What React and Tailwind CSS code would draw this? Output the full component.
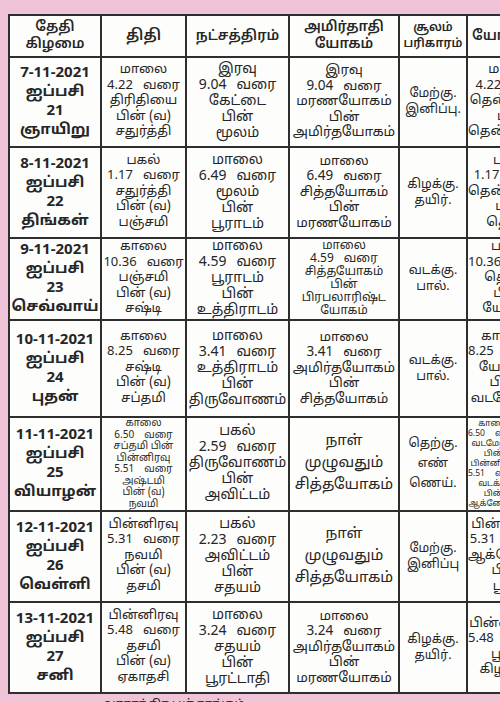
import React from "react";

const FONT = { fontFamily: '"Noto Sans Tamil", "Lohit Tamil", "Noto Sans", "DejaVu Sans", sans-serif' };

const rows = [
  {
    h: "h-[88px]",
    date: ["7-11-2021", "ஐப்பசி", "21", "ஞாயிறு"],
    tithi: ["மாலை", ["4.22", "வரை"], "திரிதியை", "பின் (வ)", "சதுர்த்தி"],
    star: ["இரவு", ["9.04", "வரை"], "கேட்டை", "பின்", "மூலம்"],
    yoga: ["இரவு", ["9.04", "வரை"], "மரணயோகம்", "பின்", "அமிர்தயோகம்"],
    soolam: ["மேற்கு.", "இனிப்பு."],
    last: ["மாலை", ["4.22", "வரை"], "தென்மேற்கு", "பின்", "தென்கிழக்கு"],
  },
  {
    h: "h-[89px]",
    date: ["8-11-2021", "ஐப்பசி", "22", "திங்கள்"],
    tithi: ["பகல்", ["1.17", "வரை"], "சதுர்த்தி", "பின் (வ)", "பஞ்சமி"],
    star: ["மாலை", ["6.49", "வரை"], "மூலம்", "பின்", "பூராடம்"],
    yoga: ["மாலை", ["6.49", "வரை"], "சித்தயோகம்", "பின்", "மரணயோகம்"],
    soolam: ["கிழக்கு.", "தயிர்."],
    last: ["பகல்", ["1.17", "வரை"], "தென்மேற்கு", "பின்", "தெற்கு"],
  },
  {
    h: "h-[80px]",
    date: ["9-11-2021", "ஐப்பசி", "23", "செவ்வாய்"],
    tithi: ["காலை", ["10.36", "வரை"], "பஞ்சமி", "பின் (வ)", "சஷ்டி"],
    star: ["மாலை", ["4.59", "வரை"], "பூராடம்", "பின்", "உத்திராடம்"],
    yoga: ["மாலை", ["4.59", "வரை"], "சித்தயோகம்", "பின்", "பிரபலாரிஷ்ட", "யோகம்"],
    yogaSmall: true,
    soolam: ["வடக்கு.", "பால்."],
    last: ["பகல்", ["10.36", "வரை"], "தெற்கு", "பின்", "யோகம்"],
  },
  {
    h: "h-[95px]",
    date: ["10-11-2021", "ஐப்பசி", "24", "புதன்"],
    tithi: ["காலை", ["8.25", "வரை"], "சஷ்டி", "பின் (வ)", "சப்தமி"],
    star: ["மாலை", ["3.41", "வரை"], "உத்திராடம்", "பின்", "திருவோணம்"],
    yoga: ["மாலை", ["3.41", "வரை"], "அமிர்தயோகம்", "பின்", "சித்தயோகம்"],
    soolam: ["வடக்கு.", "பால்."],
    last: ["காலை", ["8.25", "வரை"], "யோகம்", "பின்", "வடமேற்கு"],
  },
  {
    h: "h-[92px]",
    date: ["11-11-2021", "ஐப்பசி", "25", "வியாழன்"],
    tithi: ["காலை", ["6.50", "வரை"], "சப்தமி பின்", "பின்னிரவு", ["5.51", "வரை"], "அஷ்டமி", "பின் (வ)", "நவமி"],
    tithiSmall: true,
    star: ["பகல்", ["2.59", "வரை"], "திருவோணம்", "பின்", "அவிட்டம்"],
    yoga: ["நாள்", "முழுவதும்", "சித்தயோகம்"],
    yogaWide: true,
    soolam: ["தெற்கு.", "எண்", "ணெய்."],
    soolamWide: true,
    last: ["காலை", ["6.50", "வரை"], "வடமேற்கு", "பின்", "பின்னிரவு", ["5.51", "வரை"], "வடக்கு", "பின்", "ஆக்னேயம்"],
    lastSmall: true,
  },
  {
    h: "h-[89px]",
    date: ["12-11-2021", "ஐப்பசி", "26", "வெள்ளி"],
    tithi: ["பின்னிரவு", ["5.31", "வரை"], "நவமி", "பின் (வ)", "தசமி"],
    star: ["பகல்", ["2.23", "வரை"], "அவிட்டம்", "பின்", "சதயம்"],
    yoga: ["நாள்", "முழுவதும்", "சித்தயோகம்"],
    yogaWide: true,
    soolam: ["மேற்கு.", "இனிப்பு"],
    last: ["பின்னிரவு", ["5.31", "வரை"], "ஆக்னேயம்", "பின்", "பூமி"],
  },
  {
    h: "h-[89px]",
    date: ["13-11-2021", "ஐப்பசி", "27", "சனி"],
    tithi: ["பின்னிரவு", ["5.48", "வரை"], "தசமி", "பின் (வ)", "ஏகாதசி"],
    star: ["மாலை", ["3.24", "வரை"], "சதயம்", "பின்", "பூரட்டாதி"],
    yoga: ["மாலை", ["3.24", "வரை"], "அமிர்தயோகம்", "பின்", "மரணயோகம்"],
    soolam: ["கிழக்கு.", "தயிர்."],
    last: ["பின்னிரவு", ["5.48", "வரை"], "பூமி", "கிழக்கு"],
  },
];

function Lines({ lines, cls }) {
  return (
    <div className={"flex flex-col items-stretch text-center " + cls}>
      {lines.map((l, i) =>
        Array.isArray(l) ? (
          <div key={i} className="flex justify-center gap-[10px]">
            <span>{l[0]}</span>
            <span>{l[1]}</span>
          </div>
        ) : (
          <div key={i} className="whitespace-nowrap">{l}</div>
        )
      )}
    </div>
  );
}

function Cell({ children, className = "" }) {
  return (
    <div className={"bg-[#fdfdfb] flex items-center justify-center overflow-hidden " + className}>
      {children}
    </div>
  );
}

export default function App() {
  return (
    <div
      className="w-[500px] h-[702px] overflow-hidden bg-[#efc4d8] pt-[14px] pl-[8px] text-[#262626]"
      style={FONT}
    >
      <div className="grid grid-cols-[90px_83px_101px_108px_66px_92px] gap-[2px] bg-[#2e2e2e] p-[2px] w-[560px]">
        {/* header */}
        <Cell className="h-[40px]">
          <Lines lines={["தேதி", "கிழமை"]} cls="text-[14px] leading-[17px] font-semibold" />
        </Cell>
        <Cell className="h-[40px]">
          <Lines lines={["திதி"]} cls="text-[15px] leading-[17px] font-semibold" />
        </Cell>
        <Cell className="h-[40px]">
          <Lines lines={["நட்சத்திரம்"]} cls="text-[14px] leading-[17px] font-semibold" />
        </Cell>
        <Cell className="h-[40px]">
          <Lines lines={["அமிர்தாதி", "யோகம்"]} cls="text-[14px] leading-[17px] font-semibold" />
        </Cell>
        <Cell className="h-[40px]">
          <Lines lines={["சூலம்", "பரிகாரம்"]} cls="text-[12px] leading-[16px] font-semibold" />
        </Cell>
        <Cell className="h-[40px] justify-start pl-[4px]">
          <Lines lines={["யோகினி"]} cls="text-[14px] leading-[17px] font-semibold" />
        </Cell>

        {rows.map((r, i) => (
          <React.Fragment key={i}>
            <Cell className={r.h}>
              <Lines lines={r.date} cls="text-[15px] leading-[19px] font-bold" />
            </Cell>
            <Cell className={r.h}>
              <Lines
                lines={r.tithi}
                cls={r.tithiSmall ? "text-[10px] leading-[11.5px]" : "text-[13px] leading-[15.5px]"}
              />
            </Cell>
            <Cell className={r.h}>
              <Lines lines={r.star} cls="text-[14px] leading-[16px]" />
            </Cell>
            <Cell className={r.h}>
              <Lines
                lines={r.yoga}
                cls={
                  r.yogaWide
                    ? "text-[15px] leading-[22px]"
                    : r.yogaSmall
                    ? "text-[12px] leading-[13px]"
                    : "text-[13.5px] leading-[15.5px]"
                }
              />
            </Cell>
            <Cell className={r.h}>
              <Lines
                lines={r.soolam}
                cls={r.soolamWide ? "text-[12.5px] leading-[20px]" : "text-[12.5px] leading-[16px]"}
              />
            </Cell>
            <Cell className={r.h + " justify-start"}>
              <Lines
                lines={r.last}
                cls={r.lastSmall ? "text-[8.5px] leading-[10px]" : "text-[13px] leading-[15.5px]"}
              />
            </Cell>
          </React.Fragment>
        ))}
      </div>
      <div className="pl-[95px] pt-[4px] text-[12px] leading-[14px] text-[#222]">வாராந்திர பஞ்சாங்கம்</div>
    </div>
  );
}
